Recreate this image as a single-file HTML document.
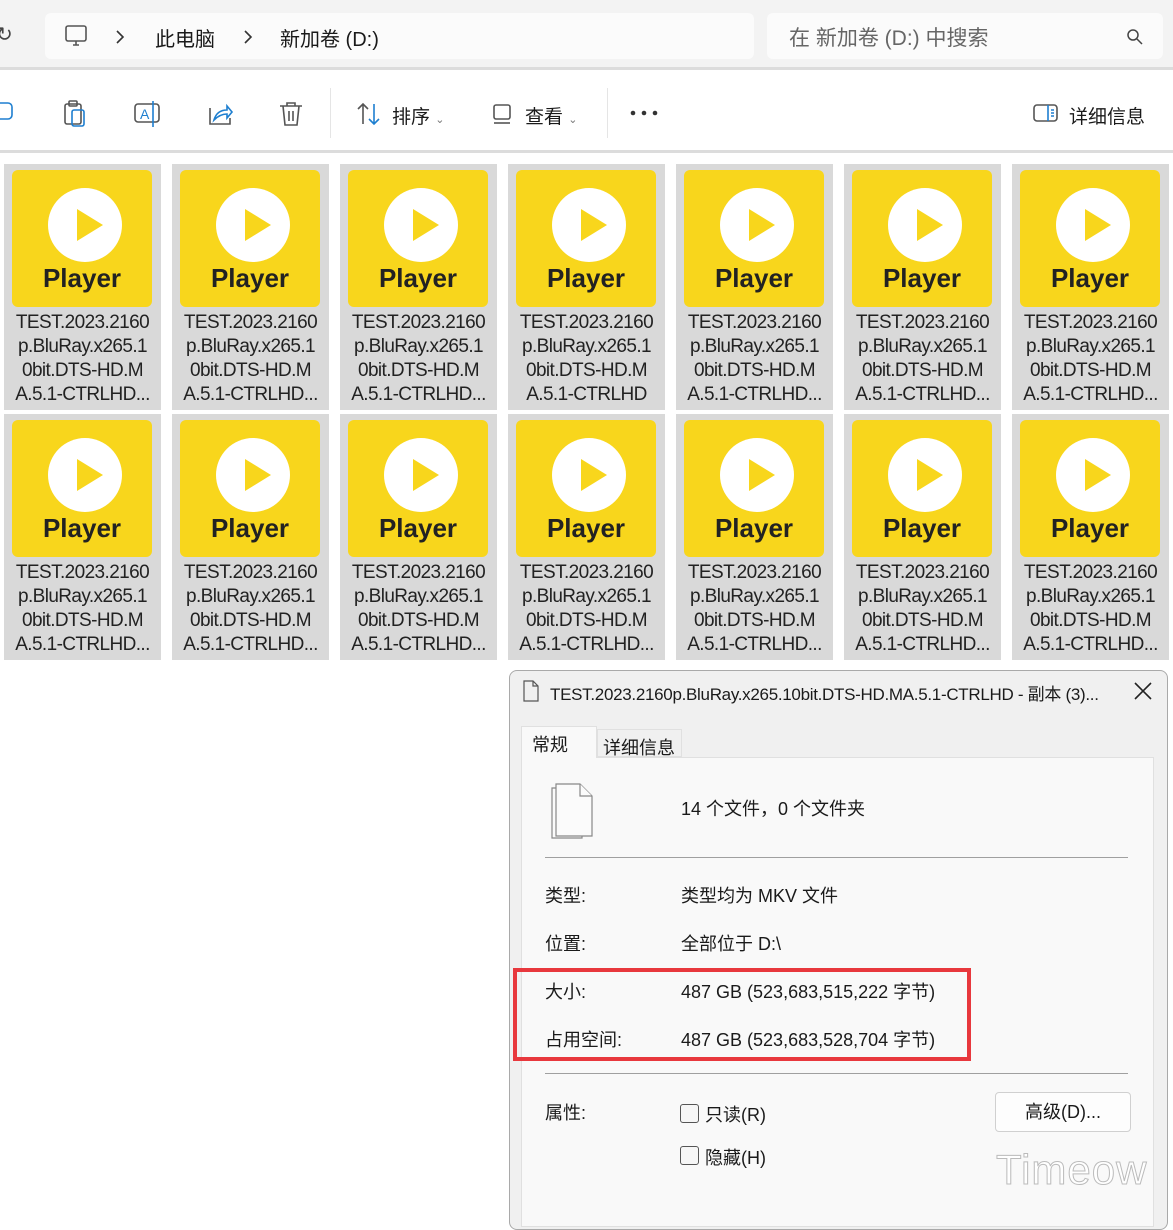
<!DOCTYPE html>
<html><head><meta charset="utf-8"><style>
*{margin:0;padding:0;box-sizing:border-box}
body{width:1173px;height:1214px;overflow:hidden;background:#fff;position:relative;font-family:"Liberation Sans","Noto Sans CJK SC",sans-serif;color:#1a1a1a}
.a{position:absolute}
.top{left:0;top:0;width:1173px;height:70px;background:#f3f3f3;border-bottom:3px solid #dcdcdc}
.crumb{left:45px;top:13px;width:709px;height:46px;background:#fbfbfb;border-radius:6px}
.search{left:767px;top:13px;width:396px;height:46px;background:#fbfbfb;border-radius:6px;font-size:21px;color:#666;padding:9px 22px}
.tb{left:0;top:72px;width:1173px;height:81px;background:#fff;border-bottom:3px solid #dcdcdc}
.t{font-size:19px}
.tile{width:157px;height:246px;background:#d9d9d9}
.ic{position:absolute;left:8px;top:6px;width:140px;height:137px;background:#f8d61c;border-radius:6px}
.circ{position:absolute;left:36px;top:18px;width:74px;height:74px;border-radius:50%;background:#fff}
.tri{position:absolute;left:29px;top:21px;width:0;height:0;border-left:26px solid #f8d61c;border-top:16px solid transparent;border-bottom:16px solid transparent}
.pl{position:absolute;left:0;width:140px;top:93px;text-align:center;font-weight:bold;font-size:26px;color:#222}
.nm{position:absolute;left:0;top:147px;width:157px;text-align:center;font-size:19px;line-height:24px;color:#222;white-space:nowrap;letter-spacing:-0.6px}
.dlg{left:509px;top:670px;width:659px;height:560px;background:#f0f0f0;border:1px solid #a9a9a9;border-radius:8px}
.panel{left:521px;top:757px;width:633px;height:470px;background:#f9f9f9;border:1px solid #e0e0e0}
.lbl{font-size:18px;color:#1a1a1a}
.cb{width:19px;height:19px;border:1px solid #555;border-radius:3px;background:#f6f6f6}
</style></head><body>
<div class="a top"></div>
<div class="a" style="left:-4px;top:22px;font-size:20px;color:#444">↻</div>
<div class="a crumb"></div>
<svg class="a" style="left:64px;top:24px" width="24" height="24" viewBox="0 0 24 24" fill="none" stroke="#555" stroke-width="1.6"><rect x="2" y="2" width="20" height="15" rx="2"/><path d="M9 21h6M12 17v4"/></svg>
<svg class="a" style="left:115px;top:29px" width="10" height="16" viewBox="0 0 10 16" fill="none" stroke="#333" stroke-width="1.6"><path d="M2 2l6 6-6 6"/></svg>
<div class="a" style="left:155px;top:23px;font-size:20px">此电脑</div>
<svg class="a" style="left:243px;top:29px" width="10" height="16" viewBox="0 0 10 16" fill="none" stroke="#333" stroke-width="1.6"><path d="M2 2l6 6-6 6"/></svg>
<div class="a" style="left:280px;top:23px;font-size:20px">新加卷 (D:)</div>
<div class="a search">在 新加卷 (D:) 中搜索</div>
<svg class="a" style="left:1126px;top:28px" width="18" height="18" viewBox="0 0 18 18" fill="none" stroke="#444" stroke-width="1.5"><circle cx="7" cy="7" r="5"/><path d="M11 11l5 5"/></svg>
<div class="a tb"></div>
<svg class="a" style="left:0;top:100px" width="310" height="28" viewBox="0 0 310 28" fill="none" stroke-width="1.6">
<rect x="-6" y="3" width="18" height="16" rx="4" stroke="#1e7fd0"/>
<rect x="65" y="4" width="16" height="20" rx="2" stroke="#555"/><rect x="69" y="1" width="8" height="5" rx="1" stroke="#555"/><rect x="72" y="10" width="12" height="16" rx="2" stroke="#1e7fd0"/>
<rect x="135" y="4" width="24" height="18" rx="3" stroke="#555"/><text x="140" y="19" font-size="14" fill="#1e7fd0" stroke="none" font-family="Liberation Sans">A</text><path d="M153 1v26" stroke="#1e7fd0"/>
<path d="M210 8v16h20v-6" stroke="#555"/><path d="M214 20c2-7 7-10 13-10V6l5 6-5 6v-4c-5 0-9 2-13 6z" stroke="#1e7fd0"/>
<path d="M280 6h22M287 6V3h8v3M283 6l2 19h12l2-19M289 11v10M293 11v10" stroke="#555"/>
</svg>
<div class="a" style="left:330px;top:88px;width:1px;height:50px;background:#e5e5e5"></div>
<svg class="a" style="left:356px;top:102px" width="26" height="24" viewBox="0 0 26 24" fill="none" stroke-width="1.6"><path d="M7 22V2M2 7l5-5 5 5" stroke="#555"/><path d="M18 2v20M13 17l5 5 5-5" stroke="#1e7fd0"/></svg>
<div class="a t" style="left:392px;top:102px">排序 <span style="font-size:11px;color:#777">⌄</span></div>
<svg class="a" style="left:492px;top:103px" width="22" height="22" viewBox="0 0 22 22" fill="none" stroke="#555" stroke-width="1.6"><rect x="2" y="2" width="16" height="14" rx="2"/><path d="M2 20h16"/></svg>
<div class="a t" style="left:525px;top:102px">查看 <span style="font-size:11px;color:#777">⌄</span></div>
<div class="a" style="left:607px;top:88px;width:1px;height:50px;background:#e5e5e5"></div>
<svg class="a" style="left:630px;top:110px" width="28" height="6" viewBox="0 0 28 6" fill="#333"><circle cx="3" cy="3" r="2.3"/><circle cx="14" cy="3" r="2.3"/><circle cx="25" cy="3" r="2.3"/></svg>
<svg class="a" style="left:1033px;top:103px" width="26" height="20" viewBox="0 0 26 20" fill="none" stroke-width="1.6"><rect x="1" y="2" width="23" height="16" rx="3" stroke="#555"/><path d="M15 2v16" stroke="#1e7fd0"/><path d="M18 7h3M18 10h3M18 13h3" stroke="#1e7fd0"/></svg>
<div class="a t" style="left:1069px;top:102px">详细信息</div>

<div id="g"></div>
<script>
var h='';for(var r=0;r<2;r++)for(var c=0;c<7;c++){var x=4+c*168,y=164+r*250;var last=(r==0&&c==3)?'A.5.1-CTRLHD':'A.5.1-CTRLHD...';
h+='<div class="a tile" style="left:'+x+'px;top:'+y+'px"><div class="ic"><div class="circ"><div class="tri"></div></div><div class="pl">Player</div></div><div class="nm">TEST.2023.2160<br>p.BluRay.x265.1<br>0bit.DTS-HD.M<br>'+last+'</div></div>';}
document.getElementById('g').innerHTML=h;
</script>

<div class="a dlg"></div>
<svg class="a" style="left:522px;top:680px" width="18" height="22" viewBox="0 0 18 22" fill="none" stroke="#555" stroke-width="1.2"><path d="M2 1h9l5 5v15H2z M11 1v5h5"/></svg>
<div class="a" style="left:550px;top:680px;font-size:17px;white-space:nowrap;letter-spacing:-0.3px">TEST.2023.2160p.BluRay.x265.10bit.DTS-HD.MA.5.1-CTRLHD - 副本 (3)...</div>
<svg class="a" style="left:1133px;top:681px" width="20" height="20" viewBox="0 0 20 20" fill="none" stroke="#222" stroke-width="1.6"><path d="M2 2l16 16M18 2L2 18"/></svg>
<div class="a" style="left:521px;top:726px;width:76px;height:32px;background:#f9f9f9;border:1px solid #e0e0e0;border-bottom:none;z-index:2"></div>
<div class="a" style="left:597px;top:729px;width:85px;height:28px;background:#f0f0f0;border:1px solid #e0e0e0"></div>
<div class="a panel"></div>
<div class="a lbl" style="left:532px;top:731px;z-index:3">常规</div>
<div class="a lbl" style="left:603px;top:734px">详细信息</div>
<svg class="a" style="left:550px;top:782px" width="48" height="58" viewBox="0 0 48 58" fill="#fbfbfb" stroke="#888" stroke-width="1.2"><path d="M2 6h30v50H2z"/><path d="M6 2h24l12 12v40H6z"/><path d="M30 2v12h12"/></svg>
<div class="a lbl" style="left:681px;top:795px">14 个文件，0 个文件夹</div>
<div class="a" style="left:545px;top:857px;width:583px;height:1px;background:#a0a0a0"></div>
<div class="a lbl" style="left:545px;top:882px">类型:</div><div class="a lbl" style="left:681px;top:882px">类型均为 MKV 文件</div>
<div class="a lbl" style="left:545px;top:930px">位置:</div><div class="a lbl" style="left:681px;top:930px">全部位于 D:\</div>
<div class="a lbl" style="left:545px;top:978px">大小:</div><div class="a lbl" style="left:681px;top:978px">487 GB (523,683,515,222 字节)</div>
<div class="a lbl" style="left:545px;top:1026px">占用空间:</div><div class="a lbl" style="left:681px;top:1026px">487 GB (523,683,528,704 字节)</div>
<div class="a" style="left:513px;top:968px;width:458px;height:93px;border:4px solid #e8383d"></div>
<div class="a" style="left:545px;top:1073px;width:583px;height:1px;background:#a0a0a0"></div>
<div class="a lbl" style="left:545px;top:1099px">属性:</div>
<div class="a cb" style="left:680px;top:1104px"></div><div class="a lbl" style="left:705px;top:1101px">只读(R)</div>
<div class="a cb" style="left:680px;top:1146px"></div><div class="a lbl" style="left:705px;top:1144px">隐藏(H)</div>
<div class="a" style="left:995px;top:1092px;width:136px;height:40px;background:#fdfdfd;border:1px solid #d0d0d0;border-radius:4px;text-align:center;font-size:18px;line-height:38px">高级(D)...</div>
<div class="a" style="left:996px;top:1146px;font-size:42px;color:#fff;-webkit-text-stroke:1px #bbb;letter-spacing:1px">Timeow</div>
</body></html>
